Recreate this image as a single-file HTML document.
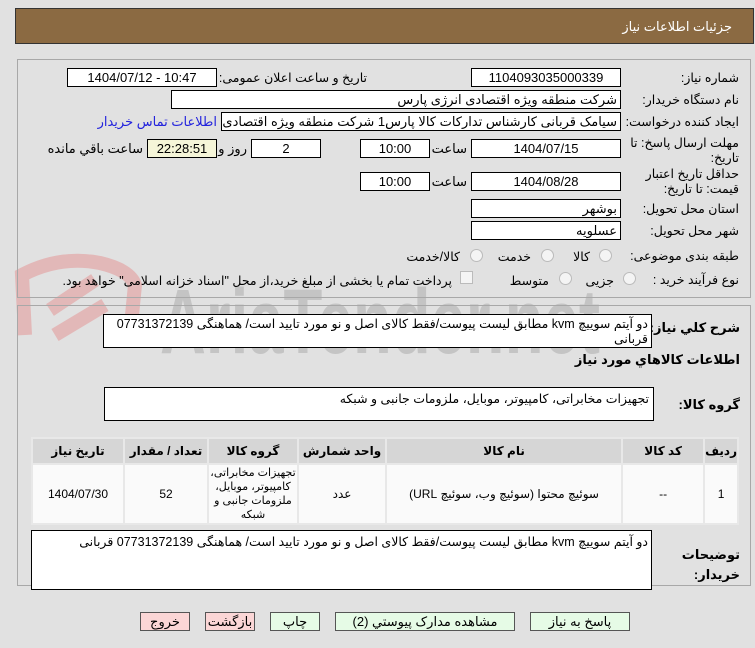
<!DOCTYPE html>
<html><head><meta charset="utf-8"><style>
body{margin:0;width:755px;height:648px;background:#e1e1e1;font-family:"Liberation Sans","DejaVu Sans",sans-serif;font-size:12px;color:#000;position:relative;overflow:hidden}
.a{position:absolute}
.box{position:absolute;background:#fff;border:1px solid #000;box-sizing:border-box;height:19px;line-height:17px;text-align:center;font-size:13px;white-space:nowrap;overflow:hidden}
.r{direction:rtl;text-align:right;padding-right:3px}
.lbl{position:absolute;direction:rtl;text-align:right;white-space:nowrap;font-size:12.5px}
.panel{position:absolute;border:1px solid #a8a8a8;box-sizing:border-box}
.btn{position:absolute;border:1px solid #555;box-sizing:border-box;height:19px;line-height:17px;text-align:center;font-size:13px;direction:rtl}
table{border-collapse:separate;border-spacing:2px;position:absolute;background:#e8e8e8}
td,th{text-align:center;direction:rtl;font-size:12px;padding:0}
th{background:#d6d6d6;height:24px;font-weight:bold}
td{background:#fafafa;height:58px;line-height:13px}
.rad{position:absolute;width:11px;height:11px;border:1px solid #bbb;border-radius:50%;background:#f4f4f4}
</style></head><body>
<svg class="a" style="left:0;top:235px" width="620" height="125">
<path d="M25 100 L22 40 Q60 20 100 28 Q130 35 135 50 L130 100" fill="none" stroke="#e2b8b8" stroke-width="14"/>
<path d="M50 75 L95 45 M55 100 L105 70" stroke="#e2b8b8" stroke-width="14"/>
<text x="160" y="118" font-family="Liberation Sans" font-weight="bold" font-size="92" fill="#c4c4c4" textLength="440" lengthAdjust="spacingAndGlyphs">AriaTender.net</text>
</svg>
<div class="a" style="left:15px;top:8px;width:739px;height:36px;background:#8b6a42;border:1px solid #333;box-sizing:border-box"></div>
<div class="lbl" style="right:23px;top:19px;color:#fff;font-size:13px">جزئیات اطلاعات نیاز</div>

<div class="panel" style="left:17px;top:59px;width:734px;height:239px"></div>
<div class="lbl" style="right:16px;top:70px">شماره نیاز:</div>
<div class="box" style="left:471px;top:68px;width:150px">1104093035000339</div>
<div class="lbl" style="right:388px;top:70px">تاریخ و ساعت اعلان عمومی:</div>
<div class="box" style="left:67px;top:68px;width:150px">1404/07/12 - 10:47</div>
<div class="lbl" style="right:16px;top:92px">نام دستگاه خریدار:</div>
<div class="box r" style="left:171px;top:90px;width:450px">شرکت منطقه ویژه اقتصادی انرژی پارس</div>
<div class="lbl" style="right:16px;top:114px">ایجاد کننده درخواست:</div>
<div class="box r" style="left:221px;top:112px;width:400px">سیامک قربانی کارشناس تدارکات کالا پارس1 شرکت منطقه ویژه اقتصادی انرژی</div>
<div class="lbl" style="right:538px;top:114px;color:#2222dd;font-size:13px">اطلاعات تماس خریدار</div>
<div class="lbl" style="right:16px;top:136px;line-height:15px">مهلت ارسال پاسخ: تا<br>تاریخ:</div>
<div class="box" style="left:471px;top:139px;width:150px">1404/07/15</div>
<div class="lbl" style="right:288px;top:141px;font-size:13px">ساعت</div>
<div class="box" style="left:360px;top:139px;width:70px">10:00</div>
<div class="box" style="left:251px;top:139px;width:70px">2</div>
<div class="lbl" style="right:508px;top:141px;font-size:13px">روز و</div>
<div class="box" style="left:147px;top:139px;width:70px;background:#f5f5d8">22:28:51</div>
<div class="lbl" style="right:612px;top:141px;font-size:13px">ساعت باقي مانده</div>
<div class="lbl" style="right:16px;top:167px;line-height:15px">حداقل تاریخ اعتبار<br>قیمت: تا تاریخ:</div>
<div class="box" style="left:471px;top:172px;width:150px">1404/08/28</div>
<div class="lbl" style="right:288px;top:174px;font-size:13px">ساعت</div>
<div class="box" style="left:360px;top:172px;width:70px">10:00</div>
<div class="lbl" style="right:16px;top:201px">استان محل تحویل:</div>
<div class="box r" style="left:471px;top:199px;width:150px">بوشهر</div>
<div class="lbl" style="right:16px;top:223px">شهر محل تحویل:</div>
<div class="box r" style="left:471px;top:221px;width:150px">عسلویه</div>
<div class="lbl" style="right:16px;top:248px">طبقه بندی موضوعی:</div>
<div class="rad" style="left:599px;top:249px"></div><div class="lbl" style="right:165px;top:249px">کالا</div>
<div class="rad" style="left:541px;top:249px"></div><div class="lbl" style="right:224px;top:249px">خدمت</div>
<div class="rad" style="left:470px;top:249px"></div><div class="lbl" style="right:295px;top:249px">کالا/خدمت</div>
<div class="lbl" style="right:16px;top:272px">نوع فرآیند خرید :</div>
<div class="rad" style="left:623px;top:272px"></div><div class="lbl" style="right:141px;top:273px">جزیی</div>
<div class="rad" style="left:559px;top:272px"></div><div class="lbl" style="right:206px;top:273px">متوسط</div>
<div class="a" style="left:460px;top:271px;width:11px;height:11px;border:1px solid #bbb;background:#f4f4f4"></div>
<div class="lbl" style="right:303px;top:273px">پرداخت تمام یا بخشی از مبلغ خرید،از محل "اسناد خزانه اسلامی" خواهد بود.</div>

<div class="panel" style="left:17px;top:305px;width:734px;height:281px"></div>
<div class="lbl" style="right:15px;top:320px;font-weight:bold;font-size:13px">شرح کلي نیاز:</div>
<div class="a" style="left:103px;top:314px;width:549px;height:34px;background:#fff;border:1px solid #000;box-sizing:border-box;direction:rtl;padding:2px 3px;font-size:12.5px;line-height:15px">دو آیتم سوییچ kvm مطابق لیست پیوست/فقط کالای اصل و نو مورد تایید است/ هماهنگی 07731372139 قربانی</div>
<div class="lbl" style="right:15px;top:352px;font-weight:bold;font-size:13px">اطلاعات کالاهاي مورد نیاز</div>
<div class="lbl" style="right:15px;top:397px;font-weight:bold;font-size:13px">گروه کالا:</div>
<div class="a" style="left:104px;top:387px;width:550px;height:34px;background:#fff;border:1px solid #000;box-sizing:border-box;direction:rtl;padding:3px 4px;font-size:12.5px">تجهیزات مخابراتی، کامپیوتر، موبایل، ملزومات جانبی و شبکه</div>
<table style="left:31px;top:437px;width:708px;direction:rtl">
<tr><th style="width:29px">ردیف</th><th style="width:80px">کد کالا</th><th>نام کالا</th><th style="width:86px">واحد شمارش</th><th style="width:88px">گروه کالا</th><th style="width:82px">تعداد / مقدار</th><th style="width:90px">تاریخ نیاز</th></tr>
<tr><td>1</td><td>--</td><td>سوئیچ محتوا (سوئیچ وب، سوئیچ URL)</td><td>عدد</td><td style="font-size:11px;line-height:14px;white-space:nowrap">تجهیزات مخابراتی،<br>کامپیوتر، موبایل،<br>ملزومات جانبی و<br>شبکه</td><td>52</td><td>1404/07/30</td></tr>
</table>
<div class="lbl" style="right:15px;top:545px;font-weight:bold;font-size:13px;line-height:20px">توضیحات<br>خریدار:</div>
<div class="a" style="left:31px;top:530px;width:621px;height:60px;background:#fff;border:1px solid #000;box-sizing:border-box;direction:rtl;padding:3px 3px;font-size:12.5px">دو آیتم سوییچ kvm مطابق لیست پیوست/فقط کالای اصل و نو مورد تایید است/ هماهنگی 07731372139 قربانی</div>

<div class="btn" style="left:530px;top:612px;width:100px;background:#e6fbe6">پاسخ به نیاز</div>
<div class="btn" style="left:335px;top:612px;width:180px;background:#e6fbe6">مشاهده مدارک پیوستي (2)</div>
<div class="btn" style="left:270px;top:612px;width:50px;background:#e6fbe6">چاپ</div>
<div class="btn" style="left:205px;top:612px;width:50px;background:#fbd6d6">بازگشت</div>
<div class="btn" style="left:140px;top:612px;width:50px;background:#fbd6d6">خروج</div>
</body></html>
